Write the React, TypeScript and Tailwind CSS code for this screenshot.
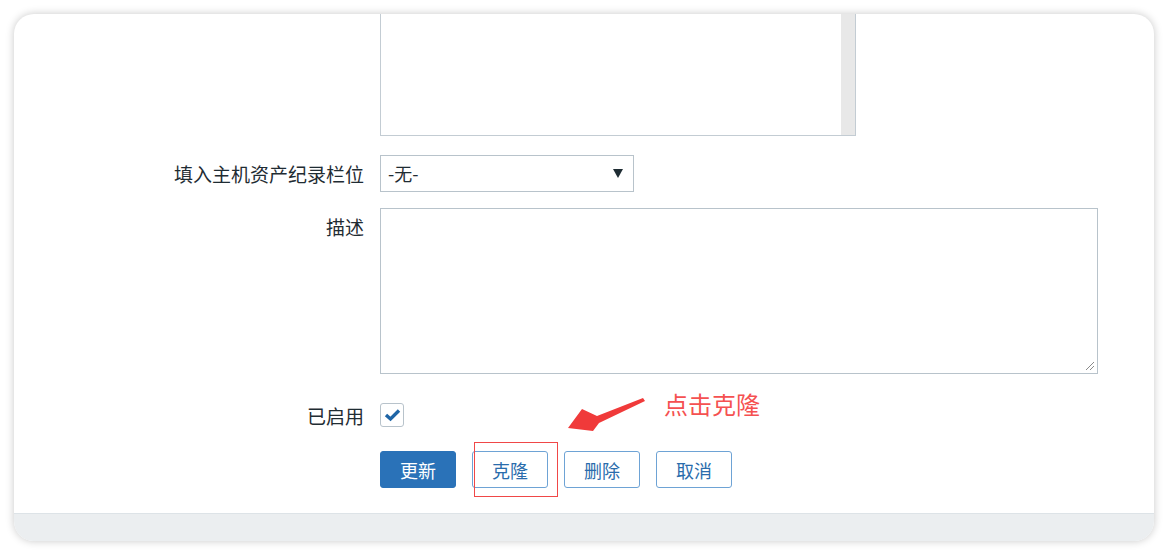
import React from "react";

const font = { fontFamily: '"Noto Sans CJK SC", "Noto Sans", sans-serif' };

function Label({ children, className = "" }: { children: React.ReactNode; className?: string }) {
  return <div className={"text-right text-[19px] leading-none text-[#1f2c33] " + className}>{children}</div>;
}

function Btn({ children, primary }: { children: React.ReactNode; primary?: boolean }) {
  return (
    <button
      className={
        "h-[37px] w-[76px] rounded-[3px] border text-[18px] leading-none " +
        (primary
          ? "border-[#2a72b8] bg-[#2a72b8] text-white"
          : "border-[#6ea3d5] bg-white text-[#2a6cac]")
      }
    >
      {children}
    </button>
  );
}

export default function App() {
  return (
    <div className="h-[555px] w-full bg-white p-[14px]" style={font}>
      <div className="relative flex h-full flex-col overflow-hidden rounded-[20px] bg-white shadow-[0_0_8px_rgba(0,0,0,0.22)]">
        <div className="grid flex-1 grid-cols-[350px_1fr] content-start gap-x-4">
          {/* top textarea (scrolled, cut off) */}
          <div />
          <div className="flex h-[122px] w-[476px] border-x border-b border-[#c3ccd3]">
            <div className="flex-1 bg-white" />
            <div className="w-[14px] bg-[#e8e8e8]" />
          </div>

          {/* inventory field */}
          <Label className="mt-[19px] pt-[9px]">填入主机资产纪录栏位</Label>
          <div className="mt-[19px] flex h-[37px] w-[254px] items-center justify-between border border-[#b8c3cb] pl-[7px] pr-[10px] text-[18px] text-[#1f2c33]">
            <span>-无-</span>
            <svg width="10" height="9" viewBox="0 0 10 9">
              <path d="M0 0 H10 L5 9 Z" fill="#1f2c33" />
            </svg>
          </div>

          {/* description */}
          <Label className="mt-[16px] pt-[9px]">描述</Label>
          <div className="relative mt-[16px] h-[166px] w-[718px] border border-[#b8c3cb]">
            <svg className="absolute right-[2px] bottom-[2px]" width="11" height="11" viewBox="0 0 11 11">
              <path d="M10 2 L2 10 M10 6 L6 10" stroke="#8a8a8a" strokeWidth="1" />
            </svg>
          </div>

          {/* enabled */}
          <Label className="mt-[29px] pt-[3px]">已启用</Label>
          <div className="mt-[29px]">
            <div className="flex h-[24px] w-[24px] items-center justify-center rounded-[3px] border border-[#b8c3cb] bg-white">
              <svg width="17" height="14" viewBox="0 0 17 14">
                <path d="M2 7 L6.5 11 L15 2.5" fill="none" stroke="#1f65a6" strokeWidth="3.4" />
              </svg>
            </div>
          </div>

          {/* buttons */}
          <div />
          <div className="mt-[24px] flex gap-4">
            <Btn primary>更新</Btn>
            <Btn>克隆</Btn>
            <Btn>删除</Btn>
            <Btn>取消</Btn>
          </div>
        </div>

        <div className="h-[28px] border-t border-[#dde3e7] bg-[#ebeef0]" />

        {/* annotation overlay */}
        <div className="absolute left-[460px] top-[428px] h-[55px] w-[84px] border border-[#f04848]" />
        <svg className="absolute left-[546px] top-[376px]" width="110" height="50" viewBox="560 390 110 50">
          <polygon
            points="643,398 597,416 582,409 568,428 593,431 599,423 645,401"
            fill="#f03a3a"
          />
        </svg>
        <div className="absolute left-[650px] top-[378px] text-[24px] leading-none text-[#f55151]">点击克隆</div>
      </div>
    </div>
  );
}
